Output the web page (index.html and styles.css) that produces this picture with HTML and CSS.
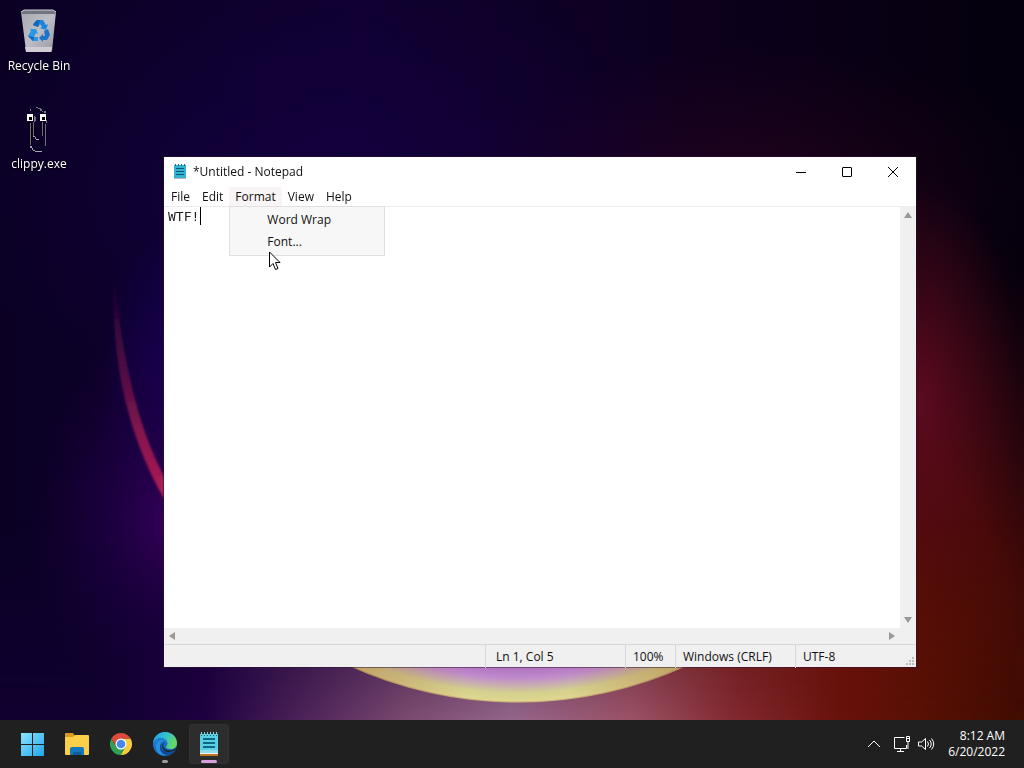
FILE: index.html
```
<!DOCTYPE html>
<html lang="en">
<head>
  <meta charset="UTF-8">
  <meta name="viewport" content="width=device-width, initial-scale=1">
  <title>*Untitled - Notepad</title>
  <link rel="stylesheet" href="styles.css">
</head>
<body>
  <!-- Wallpaper -->
  <svg class="wallpaper" viewBox="0 0 1024 768" preserveAspectRatio="xMidYMid slice" aria-hidden="true">
    <defs>
      <linearGradient id="base" x1="0" y1="0" x2="1" y2="0">
        <stop offset="0" stop-color="#0b0024"/>
        <stop offset=".35" stop-color="#0f002e"/>
        <stop offset=".7" stop-color="#0c001c"/>
        <stop offset="1" stop-color="#04000c"/>
      </linearGradient>
      <radialGradient id="blue"><stop offset="0" stop-color="#1c0068" stop-opacity=".7"/><stop offset="1" stop-color="#1c0068" stop-opacity="0"/></radialGradient>
      <radialGradient id="purple"><stop offset="0" stop-color="#38005c" stop-opacity=".95"/><stop offset=".5" stop-color="#22004a" stop-opacity=".6"/><stop offset="1" stop-color="#1c0040" stop-opacity="0"/></radialGradient>
      <radialGradient id="red"><stop offset="0" stop-color="#641008"/><stop offset=".5" stop-color="#540c08" stop-opacity=".85"/><stop offset="1" stop-color="#3c0612" stop-opacity="0"/></radialGradient>
      <radialGradient id="crimson"><stop offset="0" stop-color="#640b24" stop-opacity=".8"/><stop offset="1" stop-color="#500818" stop-opacity="0"/></radialGradient>
      <linearGradient id="glow" x1="0" y1="0" x2="1" y2="0">
        <stop offset=".1" stop-color="#100030"/>
        <stop offset=".2" stop-color="#1e0040"/>
        <stop offset=".29" stop-color="#4a2058"/>
        <stop offset=".4" stop-color="#7c4a70"/>
        <stop offset=".5" stop-color="#94648a"/>
        <stop offset=".62" stop-color="#9a5064"/>
        <stop offset=".72" stop-color="#80282e"/>
        <stop offset=".82" stop-color="#68120c"/>
        <stop offset=".9" stop-color="#581004"/>
        <stop offset="1" stop-color="#400c02"/>
      </linearGradient>
      <linearGradient id="fade" x1="0" y1="0" x2="0" y2="1"><stop offset="0" stop-color="#000"/><stop offset=".8" stop-color="#fff"/></linearGradient>
      <mask id="bottom"><rect y="520" width="1024" height="248" fill="url(#fade)"/></mask>
      <radialGradient id="ring" gradientUnits="userSpaceOnUse" cx="518" cy="298" r="405">
        <stop offset=".9" stop-color="#a468b8"/>
        <stop offset=".938" stop-color="#c08acc"/>
        <stop offset=".958" stop-color="#c8b0b0"/>
        <stop offset=".975" stop-color="#d4d08e"/>
        <stop offset=".995" stop-color="#dfd690"/>
        <stop offset="1" stop-color="#b28a68"/>
      </radialGradient>
      <linearGradient id="ringShade" x1="0" y1="0" x2="1" y2="0">
        <stop offset="0" stop-color="#a06838" stop-opacity=".5"/>
        <stop offset=".35" stop-color="#a06838" stop-opacity="0"/>
        <stop offset=".65" stop-color="#a06838" stop-opacity="0"/>
        <stop offset="1" stop-color="#a06838" stop-opacity=".5"/>
      </linearGradient>
      <linearGradient id="arc" x1="0" y1="0" x2="0" y2="1">
        <stop offset="0" stop-color="#5a1048" stop-opacity="0"/>
        <stop offset=".4" stop-color="#581044" stop-opacity=".8"/>
        <stop offset=".7" stop-color="#84164e"/>
        <stop offset="1" stop-color="#b41c54"/>
      </linearGradient>
      <filter id="soft"><feGaussianBlur stdDeviation="1"/></filter>
    </defs>
    <rect width="1024" height="768" fill="url(#base)"/>
    <ellipse cx="330" cy="190" rx="380" ry="240" fill="url(#blue)" opacity=".45"/>
    <ellipse cx="175" cy="380" rx="75" ry="150" fill="url(#blue)"/>
    <ellipse cx="170" cy="530" rx="140" ry="210" fill="url(#purple)"/>
    <ellipse cx="850" cy="680" rx="330" ry="500" fill="url(#red)"/>
    <ellipse cx="760" cy="190" rx="300" ry="150" fill="url(#crimson)" opacity=".3"/>
    <ellipse cx="920" cy="400" rx="100" ry="230" fill="url(#crimson)"/>
    <rect y="520" width="1024" height="248" fill="url(#glow)" mask="url(#bottom)"/>
    <path d="M347 665A405 405 0 0 0 689 665Z" fill="url(#ring)"/>
    <path d="M347 665A405 405 0 0 0 689 665Z" fill="url(#ringShade)"/>
    <path d="M114 270C110 350 124 430 166 502V480C138 428 122 360 114 270Z" fill="url(#arc)" filter="url(#soft)"/>
  </svg>

  <main class="desktop">
    <!-- Desktop icons -->
    <nav class="shortcuts" aria-label="Desktop">
      <button class="shortcut" type="button">
        <svg class="shortcut-icon" viewBox="0 0 48 48" aria-hidden="true">
          <defs>
            <linearGradient id="bin" x1="0" y1="0" x2="1" y2="1">
              <stop offset="0" stop-color="#a9a9b2"/><stop offset=".5" stop-color="#bdbdc6"/><stop offset="1" stop-color="#9797a4"/>
            </linearGradient>
          </defs>
          <g transform="translate(1 -1)">
            <path d="M5 7L8 6H38L40 7L36 46Q36 47 34 47H12Q10 47 10 46Z" fill="url(#bin)"/>
            <path d="M5 7L8 5H37L40 7L39 9H6Z" fill="#737580"/>
            <path d="M5 7L8 5H37L40 7" fill="none" stroke="#d2d2da"/>
            <path d="M9 42H36L35 47H10Z" fill="#d0ced4"/>
            <path d="M18 18L21 15H27L30 20L32 19L30 25L24 23L26 22L24 19L22 22L17 20Z" fill="#1c86dc"/>
            <path d="M14 24L20 24L22 29L20 28L18 32H22V36H17L12 31L15 26Z" fill="#2797e8"/>
            <path d="M28 26L32 24L34 30L31 35H27V37L23 33L27 29V31H29Z" fill="#1b74cc"/>
            <path d="M18 18L21 15H24L22 22L17 20ZM12 31L17 36L18 32Z" fill="#1565b8"/>
          </g>
        </svg>
        <span>Recycle Bin</span>
      </button>
      <button class="shortcut" type="button">
        <svg class="shortcut-icon" viewBox="0 0 48 48" shape-rendering="crispEdges" aria-hidden="true">
          <path d="M12 10H18V17H12ZM25 10H31V17H25Z" fill="#fff"/>
          <path d="M14 13H17V16H14ZM27 13H30V16H27Z" fill="#000"/>
          <path d="M21 3h2v1h-2zM23 4h3v1h-3zM25 5h2v2h-2zM27 7h1v1h-1zM15 5h1v2h-1zM29 7h2v2h-2zM31 16h1v3h-1zM19 12h1v6h-1zM20 13h1v4h-1z" fill="#777783"/>
          <path d="M15 19h1v22h-1zM18 18h1v14h-1zM27 18h1v14h-1zM30 20h1v22h-1z" fill="#6e6e7c"/>
          <path d="M18 32h2v1h-2zM20 33h1v2h-1zM21 35h3v1h-3zM15 42h2v2h-2zM17 44h1v2h-1zM18 46h2v1h-2zM20 47h7v1h-7z" fill="#a6a6b4"/>
          <path d="M16 19h1v22h-1zM19 19h1v13h-1zM28 18h1v14h-1zM26 36h1v4h-1z" fill="#000"/>
        </svg>
        <span>clippy.exe</span>
      </button>
    </nav>

    <!-- Notepad window -->
    <section class="window" aria-label="Notepad">
      <header class="titlebar">
        <svg class="title-icon" viewBox="0 0 16 16" aria-hidden="true">
          <path d="M2 1H14V14H2Z" fill="#35b4d2"/>
          <path d="M2 14H14V15H2Z" fill="#b9b9b9"/>
          <path d="M3.500 0V2M6.500 0V2M9.500 0V2M12.500 0V2" stroke="#176d88"/>
          <path d="M4 4.500H12M4 7.500H12M4 10.500H12" stroke="#0b5879"/>
        </svg>
        <h1 class="title">*Untitled - Notepad</h1>
        <div class="window-controls">
          <button type="button" aria-label="Minimize"><svg viewBox="0 0 12 12"><path d="M1 6.500H11"/></svg></button>
          <button type="button" aria-label="Maximize"><svg viewBox="0 0 12 12"><rect x="1.500" y="1.500" width="9" height="9" rx=".5"/></svg></button>
          <button type="button" aria-label="Close"><svg viewBox="0 0 12 12"><path d="M1 1L11 11M11 1L1 11"/></svg></button>
        </div>
      </header>

      <nav class="menubar" aria-label="Menu">
        <button type="button">File</button>
        <button type="button">Edit</button>
        <div class="menu-holder">
          <button type="button" class="open" aria-expanded="true">Format</button>
          <div class="dropdown">
            <button type="button">Word Wrap</button>
            <button type="button">Font...</button>
          </div>
        </div>
        <button type="button">View</button>
        <button type="button">Help</button>
      </nav>

      <div class="editor">
        <div class="page">
          <textarea class="text" aria-label="Text editor" spellcheck="false">WTF!</textarea>
          <span class="caret"></span>
        </div>
        <div class="scrollbar vertical">
          <button type="button" aria-label="Scroll up"><svg viewBox="0 0 8 8"><path d="M4 1L8 7H0Z"/></svg></button>
          <button type="button" aria-label="Scroll down"><svg viewBox="0 0 8 8"><path d="M0 1H8L4 7Z"/></svg></button>
        </div>
        <div class="scrollbar horizontal">
          <button type="button" aria-label="Scroll left"><svg viewBox="0 0 8 8"><path d="M7 0V8L1 4Z"/></svg></button>
          <button type="button" aria-label="Scroll right"><svg viewBox="0 0 8 8"><path d="M1 0L7 4L1 8Z"/></svg></button>
        </div>
      </div>

      <footer class="statusbar">
        <span></span>
        <span class="position">Ln 1, Col 5</span>
        <span>100%</span>
        <span>Windows (CRLF)</span>
        <span>UTF-8</span>
        <svg class="grip" viewBox="0 0 8 8" aria-hidden="true"><path d="M6 0h2v2H6zM3 3h2v2H3zM6 3h2v2H6zM0 6h2v2H0zM3 6h2v2H3zM6 6h2v2H6z"/></svg>
      </footer>
    </section>

    <!-- Mouse pointer -->
    <svg class="pointer" viewBox="0 0 12 20" aria-hidden="true">
      <path d="M.5 1V16L4 12.500L6.500 18.500L9 17.500L6.500 11.500H11Z" fill="#fff" stroke="#000"/>
    </svg>
  </main>

  <!-- Taskbar -->
  <footer class="taskbar">
    <nav class="apps" aria-label="Taskbar">
      <button type="button" aria-label="Start">
        <svg viewBox="0 0 24 24">
          <defs><linearGradient id="win" x1="0" y1="0" x2="1" y2="1"><stop offset="0" stop-color="#8be4fc"/><stop offset="1" stop-color="#22a5ec"/></linearGradient></defs>
          <path d="M0 1H11V12H0ZM12 1H23V12H12ZM0 13H11V24H0ZM12 13H23V24H12Z" fill="url(#win)"/>
        </svg>
      </button>
      <button type="button" aria-label="File Explorer">
        <svg viewBox="0 0 24 24">
          <path d="M0 2Q0 1 1 1H8L10 4H11V8H0Z" fill="#d89b1c"/>
          <path d="M0 5H8L10 3H23Q24 3 24 4V22Q24 23 23 23H1Q0 23 0 22Z" fill="#fbcf49"/>
          <path d="M5 23V17Q5 15 7 15H17Q19 15 19 17V23Z" fill="#1478bd"/>
          <path d="M8 20H16V23H8Z" fill="#0f5f9c"/>
        </svg>
      </button>
      <button type="button" aria-label="Chrome">
        <svg viewBox="0 0 24 24">
          <path d="M12 12V6.500H21.530A11 11 0 0 1 12 23Z" fill="#fbcb3c"/>
          <path d="M12 23A11 11 0 0 1 2.470 6.500L7.240 14.750L12 12L16.760 14.750Z" fill="#2fa154"/>
          <path d="M2.470 6.500A11 11 0 0 1 21.530 6.500H12L7.240 14.750Z" fill="#db4a3c"/>
          <circle cx="12" cy="12" r="5.500" fill="#fff"/>
          <circle cx="12" cy="12" r="4.300" fill="#4788ee"/>
        </svg>
      </button>
      <button type="button" class="running" aria-label="Edge">
        <svg viewBox="0 0 24 24">
          <defs>
            <linearGradient id="edgeTop" x1="0" y1="0" x2="1" y2=".4"><stop offset="0" stop-color="#229de0"/><stop offset=".5" stop-color="#30bfd6"/><stop offset="1" stop-color="#65d765"/></linearGradient>
            <linearGradient id="edgeLow" x1="0" y1="0" x2=".5" y2="1"><stop offset="0" stop-color="#2389df"/><stop offset="1" stop-color="#1463b8"/></linearGradient>
          </defs>
          <circle cx="12" cy="12" r="12" fill="url(#edgeLow)"/>
          <path d="M0 11C1 4 6 0 12 0C19 0 24 5 24 11C24 15 21 17 18 17C15 17 13 16 13 15C15 13 15 10 13 8C9 4 2 6 0 11Z" fill="url(#edgeTop)"/>
          <path d="M9 9C5 12 7 21 14 23C8 25 2 20 3 13C4 9 9 7 12 8Z" fill="#2394dc"/>
          <path d="M9 11C6 17 12 22 22 18C20 22 16 24 13 23C7 22 5 14 9 11Z" fill="#124b94"/>
          <path d="M12 10C9 12 10 17 14 18C18 19 21 18 24 15L22 18C18 20 14 21 11 18C8 15 9 11 12 10Z" fill="#202020"/>
        </svg>
      </button>
      <button type="button" class="running active" aria-label="Notepad">
        <svg viewBox="0 0 24 24">
          <path d="M3 2H21V22H3Z" fill="#5bcfe4"/>
          <path d="M3 18H21V22H3Z" fill="#8edeea"/>
          <path d="M3 21H21V22H3Z" fill="#f4f4f4"/>
          <path d="M3 22H21V24H3Z" fill="#bd7628"/>
          <path d="M4.500 0V3M7.500 0V3M10.500 0V3M13.500 0V3M16.500 0V3M19.500 0V3" stroke="#7fd8e8"/>
          <path d="M4 3.500H5M7 3.500H8M10 3.500H11M13 3.500H14M16 3.500H17M19 3.500H20" stroke="#17617a"/>
          <path d="M6 7H18M6 11H18M6 15H18" stroke="#0d6785" stroke-width="2"/>
        </svg>
      </button>
    </nav>

    <div class="tray">
      <button type="button" class="more" aria-label="Show hidden icons"><svg viewBox="0 0 18 18"><path d="M3 12L9 6L15 12"/></svg></button>
      <button type="button" aria-label="Network"><svg viewBox="0 0 18 18"><path d="M11.500 2.500H1.500V13.500H13.500V10M7.500 13.500V16.500M4 16.500H11M13.500 1.500H16.500V6.500H13.500ZM15 6.500V14M13.500 3.500H16.500"/></svg></button>
      <button type="button" aria-label="Volume"><svg viewBox="0 0 18 18"><path d="M1.500 7V11H4.500L8.500 14.500V3.500L4.500 7ZM10.500 6.500Q12.500 9 10.500 11.500M12.500 5Q16 9 12.500 13M14.500 3.500Q19 9 14.500 14.500"/></svg></button>
      <button type="button" class="clock"><span>8:12 AM</span><span>6/20/2022</span></button>
    </div>
  </footer>
</body>
</html>
```
FILE: styles.css
```
* {
  box-sizing: border-box;
}

body {
  margin: 0;
  min-height: 100vh;
  display: flex;
  flex-direction: column;
  background: #0b0024;
  color: #111;
  font-family: "Open Sans", "Noto Sans", sans-serif;
  font-size: 12px;
  line-height: 16px;
  overflow: hidden;
}

button {
  margin: 0;
  padding: 0;
  border: 0;
  background: none;
  color: inherit;
  font: inherit;
}

svg {
  display: block;
  flex: none;
}

.wallpaper {
  position: fixed;
  inset: 0;
  width: 100%;
  height: 100%;
  z-index: -1;
}

.desktop {
  position: relative;
  flex: 1;
}

/* ========== DESKTOP ICONS ========== */
.shortcuts {
  display: flex;
  flex-direction: column;
  align-items: flex-start;
  gap: 30px;
  padding: 6px 1px;
}

.shortcut {
  display: flex;
  flex-direction: column;
  align-items: center;
  gap: 4px;
  width: 76px;
  color: #fff;
  text-shadow: 0 1px 2px #000;
}

.shortcut-icon {
  width: 48px;
  height: 48px;
}

/* ========== NOTEPAD WINDOW ========== */
.window {
  position: absolute;
  top: 157px;
  right: 108px;
  bottom: 53px;
  left: 164px;
  display: flex;
  flex-direction: column;
  background: #fff;
  box-shadow: 0 0 0 1px rgba(40, 20, 50, 0.5);
}

.titlebar {
  display: flex;
  align-items: center;
  height: 30px;
  padding-left: 8px;
}

.title-icon {
  width: 16px;
  height: 16px;
}

.title {
  flex: 1;
  margin: 0 0 0 5px;
  font-size: 12px;
  font-weight: 400;
}

.window-controls {
  display: flex;
}

.window-controls button {
  display: grid;
  place-items: center;
  width: 46px;
  height: 28px;
}

.window-controls svg {
  width: 12px;
  height: 12px;
  fill: none;
  stroke: #000;
}

.menubar {
  display: flex;
  height: 20px;
  padding-left: 1px;
  border-bottom: 1px solid #ececec;
}

.menubar button {
  height: 19px;
  padding: 0 6px;
}

.menu-holder {
  position: relative;
}

.menubar .open {
  background: #f9f4f5;
}

.dropdown {
  position: absolute;
  top: 19px;
  left: 0;
  z-index: 2;
  width: 156px;
  padding: 2px 0;
  border: 1px solid #e0e0e0;
  background: #f7f7f7;
}

.menubar .dropdown button {
  display: block;
  width: 100%;
  height: 22px;
  padding: 0 37px;
  text-align: left;
}

.editor {
  flex: 1;
  display: grid;
  grid-template-columns: 1fr 16px;
  grid-template-rows: 1fr 16px;
  background: #f0f0f0;
}

.page {
  position: relative;
  display: flex;
  background: #fff;
}

.text {
  flex: 1;
  padding: 0 4px;
  border: 0;
  outline: 0;
  resize: none;
  background: none;
  color: #222;
  font-family: "DejaVu Sans Mono", monospace;
  font-size: 13px;
  line-height: 19px;
}

.caret {
  position: absolute;
  top: 0;
  left: 36px;
  width: 1px;
  height: 18px;
  background: #000;
}

.scrollbar {
  display: flex;
  justify-content: space-between;
}

.scrollbar button {
  display: grid;
  place-items: center;
  width: 16px;
  height: 16px;
}

.scrollbar svg {
  width: 8px;
  height: 8px;
  fill: #999;
}

.vertical {
  flex-direction: column;
}

.statusbar {
  position: relative;
  display: grid;
  grid-template-columns: 1fr 140px 50px 120px 121px;
  height: 23px;
  border-top: 1px solid #d7d7d7;
  background: #f0f0f0;
  line-height: 23px;
}

.statusbar span + span {
  padding-left: 7px;
  border-left: 1px solid #d7d7d7;
}

.statusbar span.position {
  padding-left: 10px;
}

.grip {
  position: absolute;
  right: 2px;
  bottom: 2px;
  width: 8px;
  height: 8px;
  fill: #bbb;
}

.pointer {
  position: absolute;
  top: 251px;
  left: 269px;
  z-index: 3;
  width: 12px;
  height: 20px;
}

/* ========== TASKBAR ========== */
.taskbar {
  display: flex;
  justify-content: space-between;
  align-items: center;
  height: 48px;
  padding: 0 19px 0 13px;
  background: #202020;
  color: #fff;
}

.apps {
  display: flex;
  gap: 4px;
}

.apps button {
  position: relative;
  display: grid;
  place-items: center;
  width: 40px;
  height: 40px;
  border-radius: 4px;
}

.apps svg {
  width: 24px;
  height: 24px;
}

.apps .active {
  background: #2d2d2d;
  box-shadow: inset 0 0 0 1px #323232;
}

/* Running indicator under the icon */
.running::after {
  content: "";
  position: absolute;
  bottom: 1px;
  left: 17px;
  width: 6px;
  height: 3px;
  border-radius: 2px;
  background: #9c9c9c;
}

.active::after {
  left: 12px;
  width: 16px;
  background: #d9a0dc;
}

.tray {
  display: flex;
  align-items: center;
  gap: 6px;
}

.tray svg {
  width: 18px;
  height: 18px;
  fill: none;
  stroke: #fff;
}

.tray .more {
  margin-right: 4px;
}

.clock {
  display: flex;
  flex-direction: column;
  align-items: flex-end;
  padding-left: 7px;
}
```
